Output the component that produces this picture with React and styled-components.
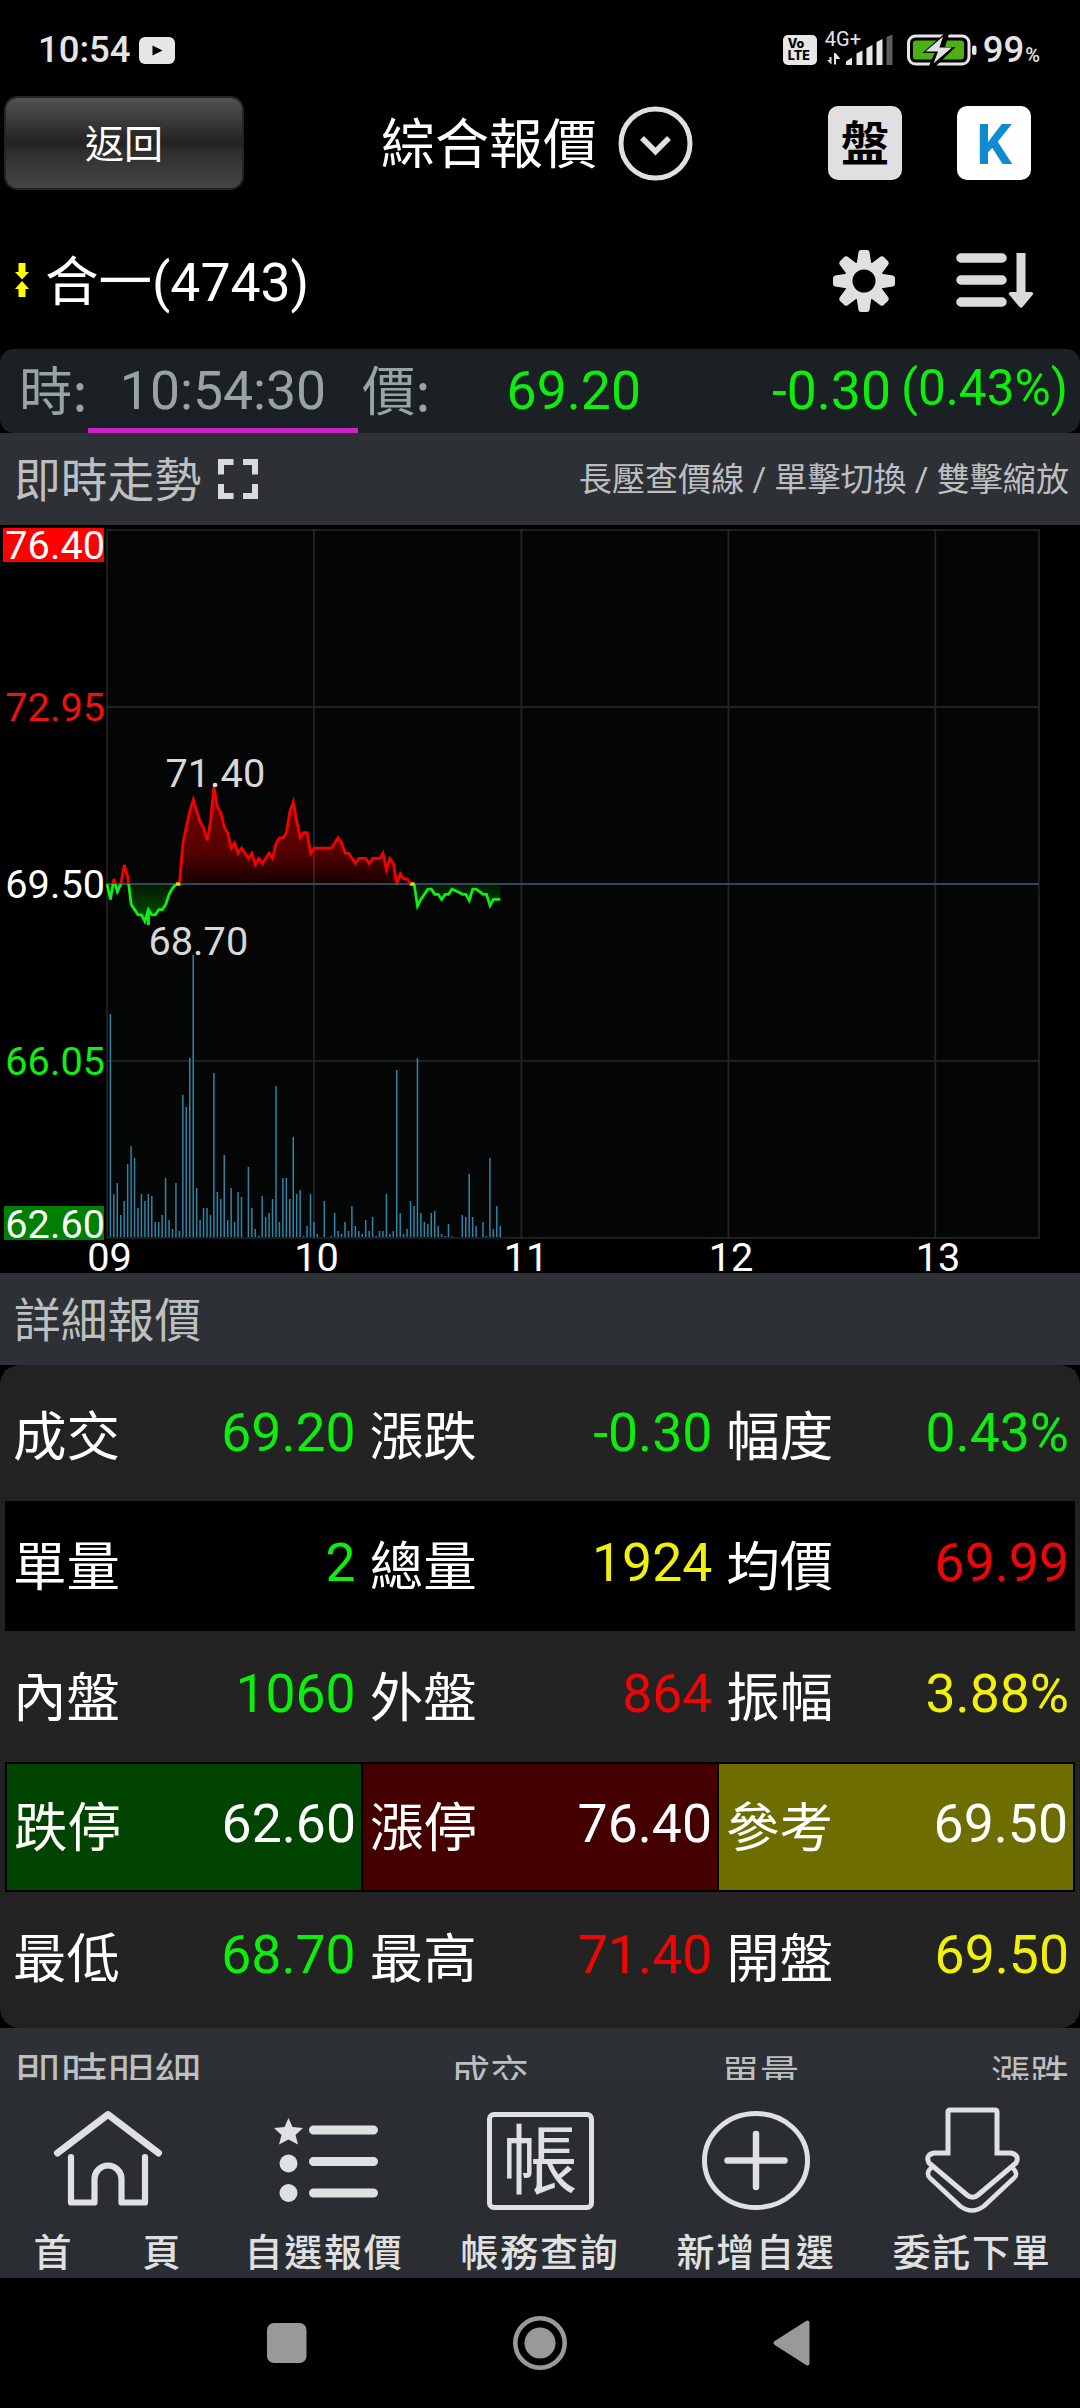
import React from 'react';
import styled, { createGlobalStyle } from 'styled-components';

const GREEN = '#0cee0c';
const RED = '#ee0606';
const YELLOW = '#f0f00c';

const GlobalStyle = createGlobalStyle`
    body {
        margin: 0;
        background: #000;
        font-family: Roboto, 'Noto Sans CJK TC', sans-serif;
    }
`;

/* ---------- data ---------- */

// one price per minute from 09:00
const PRICES = [
    69.5, 69.2, 69.6, 69.35, 69.5, 69.87, 69.64, 69.1, 69.0, 68.9,
    68.9, 68.77, 69.0, 68.9, 68.9, 69.0, 69.0, 69.1, 69.3, 69.42,
    69.5, 69.5, 70.3, 70.62, 70.92, 71.14, 70.92, 70.71, 70.6, 70.35,
    70.71, 71.4, 71.0, 70.89, 70.6, 70.5, 70.2, 70.3, 70.1, 70.2,
    70.1, 70.0, 70.1, 69.88, 70.0, 69.9, 70.0, 70.1, 70.0, 70.3,
    70.4, 70.4, 70.5, 70.91, 71.1, 70.72, 70.4, 70.5, 70.5, 70.1,
    70.2, 70.2, 70.2, 70.2, 70.2, 70.2, 70.3, 70.4, 70.3, 70.1,
    70.1, 70.0, 69.9, 70.0, 70.0, 70.0, 69.9, 70.0, 70.0, 70.0,
    70.1, 69.78, 70.0, 69.9, 69.5, 69.7, 69.6, 69.6, 69.5, 69.5,
    69.07, 69.2, 69.3, 69.4, 69.4, 69.3, 69.3, 69.2, 69.3, 69.3,
    69.4, 69.37, 69.34, 69.3, 69.3, 69.18, 69.4, 69.4, 69.35, 69.3,
    69.3, 69.08, 69.2, 69.2, 69.2,
];

const VOLUMES = [
    223, 43, 54, 22, 36, 73, 91, 79, 29, 43, 36, 43, 41, 15, 15, 22, 59, 17, 8, 54,
    6, 142, 130, 179, 282, 49, 17, 29, 29, 22, 164, 45, 38, 82, 17, 49, 15, 45, 40, 0,
    70, 29, 8, 1, 41, 20, 24, 38, 151, 15, 59, 59, 38, 100, 43, 47, 1, 11, 43, 15,
    3, 0, 36, 0, 1, 24, 6, 3, 15, 6, 31, 11, 6, 3, 17, 6, 20, 1, 6, 6,
    43, 3, 6, 167, 24, 3, 8, 36, 31, 179, 24, 15, 13, 24, 26, 11, 3, 1, 13, 1,
    0, 0, 22, 20, 63, 20, 11, 0, 15, 1, 79, 8, 31, 11,
];

const QUOTES = [
    { cells: [['成交', '69.20', GREEN], ['漲跌', '-0.30', GREEN], ['幅度', '0.43%', GREEN]] },
    { dark: true, cells: [['單量', '2', GREEN], ['總量', '1924', YELLOW], ['均價', '69.99', RED]] },
    { cells: [['內盤', '1060', GREEN], ['外盤', '864', RED], ['振幅', '3.88%', YELLOW]] },
    {
        boxed: true,
        cells: [
            ['跌停', '62.60', '#fff', '#004400'],
            ['漲停', '76.40', '#fff', '#440000'],
            ['參考', '69.50', '#fff', '#6e6e00'],
        ],
    },
    { cells: [['最低', '68.70', GREEN], ['最高', '71.40', RED], ['開盤', '69.50', YELLOW]] },
];

/* ---------- layout ---------- */

const Screen = styled.div`
    width: 1080px;
    height: 2408px;
    overflow: hidden;
    display: flex;
    flex-direction: column;
    background: #000;
    color: #fff;
    white-space: nowrap;

    svg {
        display: block;
        flex: none;
    }
`;

const StatusBar = styled.header`
    height: 96px;
    box-sizing: border-box;
    padding: 27px 40px 0 38px;
    display: flex;
    align-items: flex-start;
    justify-content: space-between;
    color: #e4e4e4;
`;

const StatusGroup = styled.div`
    height: 46px;
    display: flex;
    align-items: center;
`;

const Clock = styled.span`
    width: 101px;
    font-size: 36.5px;
    font-weight: 500;
    line-height: 46px;
`;

const VoLte = styled.div`
    width: 34px;
    height: 30px;
    margin-right: 8px;
    border-radius: 5px;
    background: #e6e6e6;
    color: #000;
    font: 800 12.5px/12px Inter, sans-serif;
    box-sizing: border-box;
    padding: 3px 0 0 5px;
`;

const Signal = styled.div`
    width: 74px;
    height: 46px;
    margin-right: 8px;
    position: relative;
    font-size: 20px;
    line-height: 24px;

    svg {
        position: absolute;
        left: 0;
        top: 7px;
    }
`;

const Percent = styled.span`
    margin-left: 6px;
    padding-top: 5px;
    font-size: 36.5px;
    font-weight: 500;
    line-height: 46px;

    small {
        font-size: 20px;
        margin-left: 1px;
    }
`;

const TitleBar = styled.div`
    height: 94px;
    display: flex;
    align-items: center;
    padding-left: 4px;
`;

const BackButton = styled.button`
    width: 240px;
    height: 94px;
    padding: 4px 0 0;
    border: 2px solid #242424;
    border-radius: 14px;
    background: linear-gradient(#525252, #3a3a3a 25%, #222 50%, #303030 62%, #464646);
    color: #fff;
    font: 39px/50px Roboto, 'Noto Sans CJK TC', sans-serif;
`;

const Title = styled.h1`
    margin: 0 18px 0 137px;
    padding-top: 5px;
    width: 219px;
    font-size: 54px;
    font-weight: 400;
    line-height: 70px;
`;

const SquareButton = styled.div`
    width: 74px;
    height: 74px;
    margin-left: ${(p) => p.$gap}px;
    border-radius: 10px;
    background: ${(p) => p.$bg};
    color: ${(p) => p.$color};
    display: flex;
    align-items: center;
    justify-content: center;
    box-sizing: border-box;
    padding-top: 3px;
    font-size: ${(p) => p.$size}px;
    font-weight: ${(p) => p.$weight};
    line-height: 74px;
`;

const StockBar = styled.div`
    height: 159px;
    box-sizing: border-box;
    padding: 55px 46px 0 15px;
    display: flex;
    align-items: flex-start;
`;

const StockName = styled.div`
    margin-left: 16px;
    padding-top: 3px;
    flex: 1;
    font-size: 53.5px;
    line-height: 70px;
`;

const StockIcons = styled.div`
    height: 72px;
    display: flex;
    align-items: center;
`;

const TickBar = styled.div`
    height: 84px;
    border-radius: 14px;
    background: #1a2023;
    box-sizing: border-box;
    padding: 0 12px 0 19px;
    display: flex;
    color: #9aa2a6;
    font-size: 53.5px;
    line-height: 84px;
`;

const TickLabel = styled.span`
    width: ${(p) => p.$w}px;
    padding-left: ${(p) => p.$pad || 0}px;
    box-sizing: border-box;
    font-family: 'Noto Sans CJK TC', sans-serif;
    line-height: 78px;
`;

const TickTime = styled.span`
    width: 270px;
    height: 84px;
    box-sizing: border-box;
    border-bottom: 5px solid #cc22cc;
    text-align: center;
`;

const TickPrice = styled.span`
    width: ${(p) => p.$w}px;
    text-align: right;
    color: ${GREEN};
`;

const TickRate = styled.span`
    flex: 1;
    text-align: right;
    color: ${GREEN};
    font-size: 49.5px;
    line-height: 79px;
`;

const SectionHead = styled.div`
    height: ${(p) => p.$h || 92}px;
    box-sizing: border-box;
    padding: 0 11px 0 14px;
    background: #2d3135;
    color: #bebfc0;
    display: flex;
    align-items: flex-start;
    overflow: hidden;
    flex: none;
`;

const SectionTitle = styled.span`
    width: 204px;
    padding-top: 2px;
    font-size: 46.8px;
    line-height: 92px;
`;

const Hint = styled.span`
    margin-left: auto;
    padding-top: 2px;
    font-size: 33.1px;
    line-height: 90px;
`;

const HeadColumn = styled.span`
    width: ${(p) => p.$w}px;
    padding-top: 2px;
    text-align: right;
    font-size: 39px;
    line-height: 90px;
`;

const ExpandIcon = styled.div`
    padding-top: 26px;
`;

const QuotePanel = styled.section`
    height: 663px;
    box-sizing: border-box;
    padding: 5px;
    border-radius: 20px;
    background: #222;
    flex: none;
`;

const QuoteRow = styled.div`
    height: 130.5px;
    display: grid;
    grid-template-columns: repeat(3, 1fr);
    background: ${(p) => (p.$dark || p.$boxed ? '#000' : '#232323')};
    gap: ${(p) => (p.$boxed ? 2 : 0)}px;
    box-sizing: border-box;
    padding: ${(p) => (p.$boxed ? 2 : 0)}px;
`;

const QuoteCell = styled.div`
    display: flex;
    justify-content: space-between;
    align-items: center;
    padding: ${(p) => (p.$bg ? '0 5px 0 7px' : '0 6px 0 8px')};
    background: ${(p) => p.$bg || 'transparent'};
    font-size: 53.5px;
    line-height: 70px;
`;

const QuoteLabel = styled.span`
    padding-top: 5px;
`;

const QuoteValue = styled.span`
    padding-bottom: 5px;
    color: ${(p) => p.$color};
`;

const TabBar = styled.nav`
    height: 198px;
    flex: none;
    display: grid;
    grid-template-columns: repeat(5, 1fr);
    background: #2a2e32;
`;

const Tab = styled.a`
    display: flex;
    flex-direction: column;
    align-items: center;
    padding-top: 24px;
    color: #e0e0e0;
    font-size: 38px;
    font-weight: 500;
    letter-spacing: 1.8px;
    line-height: 50px;
`;

const TabLabel = styled.span`
    margin-top: 12px;
    word-spacing: ${(p) => p.$spread || 0}px;
`;

const AccountBox = styled.div`
    width: 107px;
    height: 98px;
    margin: 8px 0 6px;
    box-sizing: border-box;
    border: 5px solid #e0e0e0;
    border-radius: 7px;
    text-align: center;
    font-size: 76px;
    font-weight: 400;
    letter-spacing: 0;
    line-height: 91px;
`;

const SystemNav = styled.footer`
    height: 130px;
    flex: none;
    display: flex;
    justify-content: center;
`;

/* ---------- chart ---------- */

const ChartSvg = styled.svg`
    width: 1080px;
    height: 748px;

    text {
        font-size: 39.7px;
        fill: #fff;
    }
`;

const LEFT = 107;
const STEP = 3.45;
const BASE = 359;
const FLOOR = 712;
const priceY = (p) => BASE - (p - 69.5) * 51.3;

function TrendChart() {
    const points = PRICES.map((p, i) => `${(LEFT + i * STEP).toFixed(1)},${priceY(p).toFixed(1)}`);
    const lastX = LEFT + (PRICES.length - 1) * STEP;
    const area = `M${LEFT},${BASE} L${points.join(' ')} L${lastX},${BASE} Z`;
    const dipX = LEFT + 12 * STEP;

    return (
        <ChartSvg viewBox="0 0 1080 748">
            <defs>
                <clipPath id="above"><rect x="107" y="0" width="932" height={BASE} /></clipPath>
                <clipPath id="below"><rect x="105" y={BASE} width="932" height="300" /></clipPath>
                <linearGradient id="up" gradientUnits="userSpaceOnUse" x1="0" y1="262" x2="0" y2={BASE}>
                    <stop offset="0" stopColor="#780000" />
                    <stop offset="0.65" stopColor="#580000" />
                    <stop offset="1" stopColor="#180000" />
                </linearGradient>
                <linearGradient id="down" gradientUnits="userSpaceOnUse" x1="0" y1={BASE} x2="0" y2="400">
                    <stop offset="0" stopColor="#001a00" />
                    <stop offset="0.5" stopColor="#003800" />
                    <stop offset="1" stopColor="#004800" />
                </linearGradient>
            </defs>

            <rect x="107" y="5" width="932" height="708" fill="#040606" />
            <path d={area} fill="url(#up)" clipPath="url(#above)" />
            <path d={area} fill="url(#down)" clipPath="url(#below)" />

            <g stroke="#fff" strokeOpacity="0.12" strokeWidth="1.8" fill="none">
                <rect x="107" y="5" width="932" height="708" />
                <path d="M314 5V713M521.300 5V713M728.400 5V713M935.300 5V713M107 182H1039M107 535.800H1039" />
            </g>
            <path d={`M107 ${BASE}H1039`} stroke="#2e4a5a" strokeWidth="2" />

            <g stroke="#2f84a8" strokeWidth="1.500">
                {VOLUMES.map((v, i) => v > 0 && (
                    <path key={i} d={`M${LEFT + 3.4 + i * STEP} ${FLOOR}v${-v}`} />
                ))}
            </g>

            <polyline points={points.join(' ')} fill="none" stroke="#f40000" strokeWidth="2.800" clipPath="url(#above)" />
            <g clipPath="url(#below)" stroke="#0cf014" fill="none" strokeWidth="2.800">
                <polyline points={points.join(' ')} />
                <path d={`M${dipX} ${priceY(69)}V${priceY(68.7)}`} strokeWidth="3" />
            </g>
            <rect x="176" y="357.500" width="4" height="3" fill="#f4e000" />
            <rect x="410.500" y="357.500" width="4" height="3" fill="#f4e000" />

            <rect x="3" y="3" width="101" height="34" fill="#f00" />
            <rect x="4" y="681" width="100" height="34" fill="#008000" />
            <g textAnchor="end">
                <text x="105" y="34">76.40</text>
                <text x="105" y="196" style={{ fill: '#ee1111' }}>72.95</text>
                <text x="105" y="373">69.50</text>
                <text x="105" y="550" style={{ fill: '#11ee11' }}>66.05</text>
                <text x="105" y="713">62.60</text>
            </g>
            <g textAnchor="middle">
                <text x="109.500" y="746">09</text>
                <text x="316.500" y="746">10</text>
                <text x="526" y="746">11</text>
                <text x="731" y="746">12</text>
                <text x="938" y="746">13</text>
            </g>
            <text x="165.500" y="262" style={{ fill: '#d8d8d8' }}>71.40</text>
            <text x="148.500" y="430" style={{ fill: '#d8d8d8' }}>68.70</text>
            <circle cx="215" cy="260" r="2" fill="#e0e0e0" />
        </ChartSvg>
    );
}

/* ---------- icons ---------- */

const YoutubeIcon = () => (
    <svg width="36" height="27" viewBox="0 0 36 27">
        <rect width="36" height="27" rx="6" fill="#e6e6e6" />
        <path d="M13.500 8.500l10 5-10 5z" fill="#000" />
    </svg>
);

const SignalIcon = () => (
    <svg width="74" height="32" viewBox="0 0 74 32">
        <g fill="#e6e6e6">
            <path d="M6.500 19v11.500L2 26h2.500v-3H6.500zM9 30.500V19h1.500l5 6H11v5.500z" />
            <path d="M21 27.500l6-4V31h-6zM31.500 19.500l6-3V31h-6zM41.500 14l6-3V31h-6zM51.500 8l6-3V31h-6z" />
        </g>
        <path d="M61.500 3l6-2.500V31h-6z" fill="#5c5c5c" />
    </svg>
);

const BatteryIcon = () => (
    <svg width="70" height="32" viewBox="0 0 70 32">
        <rect x="1.500" y="2" width="60.500" height="28" rx="7" fill="none" stroke="#e6e6e6" strokeWidth="3" />
        <rect x="6" y="6.500" width="51" height="19" rx="3" fill="#4caf16" />
        <rect x="65" y="11.500" width="4.500" height="9.500" rx="2" fill="#e6e6e6" />
        <path d="M37 0L15.500 19h12L22 32h7l19.500-19H38L42 0z" fill="#000" />
        <path d="M36 2.500L18.500 17.500h12.500L26.500 29.500 45 13.500H32.500z" fill="#e0e0e0" />
    </svg>
);

const DropdownIcon = () => (
    <svg width="75" height="75" viewBox="0 0 75 75" fill="none" stroke="#e0e0e0">
        <circle cx="37.500" cy="37.500" r="34.500" strokeWidth="5" />
        <path d="M24 32l13.500 13.500L51 32" strokeWidth="5.500" />
    </svg>
);

const FlatArrows = () => (
    <svg width="14" height="70" viewBox="0 -18 14 70" fill="#ff0">
        <path d="M3.500 0h7v9H14l-7 7.500L0 9h3.500zM3.500 34h7v-8H14l-7-8-7 8h3.500z" />
    </svg>
);

const GearIcon = () => (
    <svg width="64" height="64" viewBox="-32 -32 64 64">
        <g fill="#e0e0e0">
            {[0, 45, 90, 135, 180, 225, 270, 315].map((deg) => (
                <path key={deg} d="M-7.500-16L-5.500-29Q-5-31-3-31H3Q5-31 5.500-29L7.500-16z" transform={`rotate(${deg})`} />
            ))}
        </g>
        <circle r="15.500" fill="none" stroke="#e0e0e0" strokeWidth="8" />
    </svg>
);

const SortIcon = () => (
    <svg width="138" height="58" viewBox="-60 0 138 58">
        <path d="M5 6h41M5 28h41M5 50h41" stroke="#dadada" strokeWidth="9.500" strokeLinecap="round" />
        <path d="M60.500 1h9v39h6q3 1 1 3l-10 12q-1.500 1.500-3 0l-10-12q-2-2 1-3h6z" fill="#dadada" />
    </svg>
);

const FullscreenIcon = () => (
    <svg width="40" height="40" viewBox="0 0 40 40" fill="none" stroke="#dadada" strokeWidth="6">
        <path d="M3 15.500V3h12.500M25 3h12v12.500M37 25v12H25M15.500 37H3V25" />
    </svg>
);

const TabSvg = ({ children }) => (
    <svg width="112" height="112" viewBox="0 0 112 112" fill="none" stroke="#e0e0e0" strokeLinecap="round" strokeLinejoin="round">
        {children}
    </svg>
);

const HomeIcon = () => (
    <TabSvg>
        <path d="M5.500 49L56 10.500 106.500 49" strokeWidth="7" />
        <path d="M19 53v45.500h23.500V75a13.500 13.500 0 0 1 27 0v23.500H93V53" strokeWidth="6.200" />
    </TabSvg>
);

const ListIcon = () => (
    <TabSvg>
        <path d="M45.500 26h60M45.500 57.500h60M45.500 89h60" strokeWidth="9" />
        <g fill="#e0e0e0" stroke="none">
            <path d="M20.500 14l4 9 10.500 1-7.500 7 2.500 9.500-9.500-5-9.500 5 2.500-9.500-7.500-7 10.500-1z" />
            <circle cx="20.500" cy="59.500" r="9" />
            <circle cx="20.500" cy="89" r="9" />
        </g>
    </TabSvg>
);

const PlusIcon = () => (
    <TabSvg>
        <ellipse cx="56" cy="56.500" rx="51.500" ry="47" strokeWidth="5" />
        <path d="M27.500 56.500h57M56 30v53" strokeWidth="6.500" />
    </TabSvg>
);

const OrderIcon = () => (
    <TabSvg>
        <path
            d="M32 49V8q0-2 2-2h45q2 0 2 2v41h14q9 2 5 10L62 91q-5.500 4.500-11 0L13 59q-4-8 5-10z"
            strokeWidth="5"
            strokeLinejoin="miter"
        />
        <path d="M16 63q-7 6-2 11l30 28q12 9 24 0l30-28q5-4-2-11" strokeWidth="4.500" />
    </TabSvg>
);

const AndroidKeys = () => (
    <svg width="600" height="130" viewBox="240 0 600 130" fill="#999">
        <rect x="267" y="45" width="39.500" height="40" rx="7" />
        <circle cx="540" cy="65" r="24.700" fill="none" stroke="#999" strokeWidth="4.600" />
        <circle cx="540" cy="65" r="15.500" />
        <path d="M775.500 65l32-20.500v41z" stroke="#999" strokeWidth="4" strokeLinejoin="round" />
    </svg>
);

/* ---------- page ---------- */

export default function App() {
    return (
        <Screen>
            <GlobalStyle />
            <StatusBar>
                <StatusGroup>
                    <Clock>10:54</Clock>
                    <YoutubeIcon />
                </StatusGroup>
                <StatusGroup>
                    <VoLte>Vo<br />LTE</VoLte>
                    <Signal>
                        4G+
                        <SignalIcon />
                    </Signal>
                    <BatteryIcon />
                    <Percent>99<small>%</small></Percent>
                </StatusGroup>
            </StatusBar>

            <TitleBar>
                <BackButton>返回</BackButton>
                <Title>綜合報價</Title>
                <DropdownIcon />
                <SquareButton $gap={135} $bg="#e0e0e0" $color="#000" $size={48} $weight={700}>盤</SquareButton>
                <SquareButton $gap={55} $bg="#fff" $color="#118bd0" $size={56} $weight={700}>K</SquareButton>
            </TitleBar>

            <StockBar>
                <FlatArrows />
                <StockName>合一(4743)</StockName>
                <StockIcons>
                    <GearIcon />
                    <SortIcon />
                </StockIcons>
            </StockBar>

            <TickBar>
                <TickLabel $w={69}>時:</TickLabel>
                <TickTime>10:54:30</TickTime>
                <TickLabel $w={73} $pad={4}>價:</TickLabel>
                <TickPrice $w={210}>69.20</TickPrice>
                <TickPrice $w={250}>-0.30</TickPrice>
                <TickRate>(0.43%)</TickRate>
            </TickBar>

            <SectionHead>
                <SectionTitle>即時走勢</SectionTitle>
                <ExpandIcon><FullscreenIcon /></ExpandIcon>
                <Hint>長壓查價線 / 單擊切換 / 雙擊縮放</Hint>
            </SectionHead>
            <TrendChart />

            <SectionHead>
                <SectionTitle>詳細報價</SectionTitle>
            </SectionHead>
            <QuotePanel>
                {QUOTES.map((row, i) => (
                    <QuoteRow key={i} $dark={row.dark} $boxed={row.boxed}>
                        {row.cells.map(([label, value, color, bg]) => (
                            <QuoteCell key={label} $bg={bg}>
                                <QuoteLabel>{label}</QuoteLabel>
                                <QuoteValue $color={color}>{value}</QuoteValue>
                            </QuoteCell>
                        ))}
                    </QuoteRow>
                ))}
            </QuotePanel>

            <SectionHead $h={52}>
                <SectionTitle>即時明細</SectionTitle>
                <HeadColumn $w={311}>成交</HeadColumn>
                <HeadColumn $w={270}>單量</HeadColumn>
                <HeadColumn $w={270}>漲跌</HeadColumn>
            </SectionHead>

            <TabBar>
                <Tab><HomeIcon /><TabLabel $spread={58}>首 頁</TabLabel></Tab>
                <Tab><ListIcon /><TabLabel>自選報價</TabLabel></Tab>
                <Tab><AccountBox>帳</AccountBox><TabLabel>帳務查詢</TabLabel></Tab>
                <Tab><PlusIcon /><TabLabel>新增自選</TabLabel></Tab>
                <Tab><OrderIcon /><TabLabel>委託下單</TabLabel></Tab>
            </TabBar>

            <SystemNav>
                <AndroidKeys />
            </SystemNav>
        </Screen>
    );
}
